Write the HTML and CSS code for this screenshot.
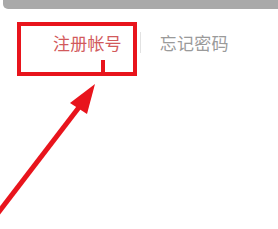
FILE: index.html
```html
<!DOCTYPE html>
<html lang="zh-CN">
<head>
  <meta charset="UTF-8" />
  <meta name="viewport" content="width=device-width, initial-scale=1" />
  <title>注册帐号</title>
  <link rel="stylesheet" href="styles.css">
</head>
<body>

  <div class="top-bar"></div>

  <div class="tabs">
    <span class="tab active">注册帐号</span>
    <span class="divider"></span>
    <span class="tab">忘记密码</span>
  </div>

  <!-- annotation: highlight box + arrow -->
  <div class="mark-box"><span class="mark-tick"></span></div>
  <svg class="mark-arrow" width="278" height="229" viewBox="0 0 278 229">
    <line x1="80" y1="106" x2="-12" y2="226" stroke="#e8141c" stroke-width="5" />
    <polygon points="95,84 70,103 87,114" fill="#e8141c" />
  </svg>

</body>
</html>
```

FILE: styles.css
```css
html, body {
  margin: 0;
  padding: 0;
  height: 100%;
  background: white;
  font-family: "Noto Sans CJK SC", "Noto Sans", sans-serif;
  overflow: hidden;
}
body {
  position: relative;
}
.top-bar {
  height: 9px;
  margin-left: 3px;
  background: #a9a9a9;
  border-bottom-left-radius: 5px;
}
.tabs {
  display: flex;
  align-items: center;
  margin-top: 23px;
  padding-left: 53px;
  font-size: 17px;
  line-height: 20px;
}
.tab {
  color: #9a9a9a;
  letter-spacing: 0.2px;
}
.tab.active {
  color: #d25a5c;
}
.divider {
  width: 1px;
  height: 21px;
  background: #e2e2e2;
  margin: 0 19px 0 18px;
}
/* Annotation layer */
.mark-box {
  position: absolute;
  left: 17px;
  top: 22px;
  width: 112px;
  height: 46px;
  border: 4px solid #e8141c;
}
.mark-tick {
  position: absolute;
  left: 80px;
  bottom: 0;
  width: 4px;
  height: 12px;
  background: #e8141c;
}
.mark-arrow {
  position: absolute;
  left: 0;
  top: 0;
}
```
